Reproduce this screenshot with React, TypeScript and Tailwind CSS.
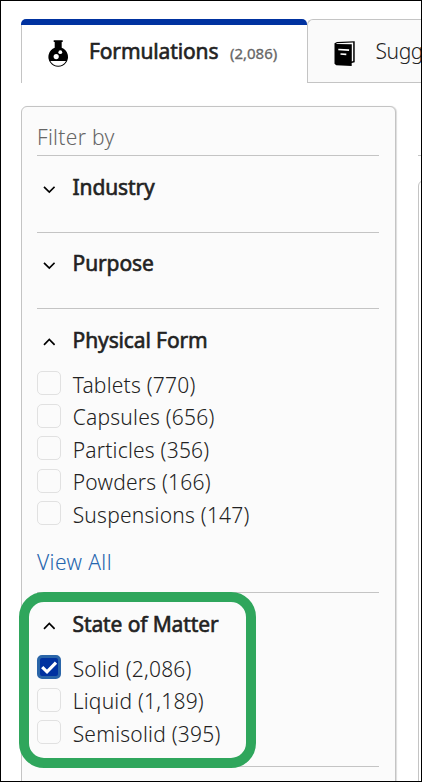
import { ReactNode } from 'react';

type Option = { label: string; count: string; checked?: boolean };

const physicalForms: Option[] = [
  { label: 'Tablets', count: '770' },
  { label: 'Capsules', count: '656' },
  { label: 'Particles', count: '356' },
  { label: 'Powders', count: '166' },
  { label: 'Suspensions', count: '147' },
];

const statesOfMatter: Option[] = [
  { label: 'Solid', count: '2,086', checked: true },
  { label: 'Liquid', count: '1,189' },
  { label: 'Semisolid', count: '395' },
];

function FlaskIcon() {
  return (
    <svg className="h-7 w-[21px] shrink-0" viewBox="0 0 21 28">
      <path d="M5.7 0.3h9v1.6h-1v5.9a9.8 9.8 0 1 1-7 0V1.9h-1z" fill="#000" />
      <path d="M2.4 21h15.6a8.8 8.8 0 0 1-15.6 0z" fill="#fff" />
      <circle cx="8.2" cy="16.6" r="2.6" fill="#fff" />
      <circle cx="12.3" cy="12.2" r="1.9" fill="#fff" />
    </svg>
  );
}

function BookIcon() {
  return (
    <svg className="h-[26px] w-[21px] shrink-0" viewBox="0 0 21 26">
      <path d="M0.5 2.2 3 .9 20.7 .3v21l-3 .8v2.9L2.3 24.2.5 22.8z" fill="#000" />
      <path d="M2.5 2.2 19.2 1.4v18.7l-1.4.4V3.3L2.5 3z" fill="#fff" />
      <path d="M4.3 8.5l10.8.6M6.5 13l5.8.4" stroke="#fff" strokeWidth="1.6" />
    </svg>
  );
}

function Chevron({ open }: { open?: boolean }) {
  return (
    <svg className="mt-px ml-[6px] h-3 w-3 shrink-0" viewBox="0 0 12 12" fill="none" stroke="#000" strokeWidth="1.7">
      <path d={open ? 'M1 8.8 6.3 3.5 11.6 8.8' : 'M1 3.8 6.3 9.1 11.6 3.8'} />
    </svg>
  );
}

function Heading({ title, open }: { title: string; open?: boolean }) {
  return (
    <button className="flex h-8 items-center">
      <Chevron open={open} />
      <span className="ml-[17.6px] tracking-[-0.12px] [-webkit-text-stroke:0.6px_#222]">{title}</span>
    </button>
  );
}

function Checkbox({ label, count, checked }: Option) {
  return (
    <label className="flex h-[32.5px] items-start">
      <span
        className={
          checked
            ? 'flex h-6 w-6 items-center justify-center rounded-[5px] border-3 border-[#2a65a8] bg-[#0032a0]'
            : 'h-6 w-6 rounded-[5px] border border-[#e1e1e1] bg-[#fbfbfb]'
        }
      >
        {checked && (
          <svg className="h-[18px] w-[18px] shrink-0" viewBox="0 0 18 18" fill="none" stroke="#fff" strokeWidth="3.2">
            <path d="M2.2 9.2 7 13.8 16 4.6" />
          </svg>
        )}
      </span>
      <span className="mt-[-0.2px] ml-[11.7px] font-[350] leading-7 tracking-[0.22px]">
        {label} ({count})
      </span>
    </label>
  );
}

function Section({ className, children }: { className: string; children?: ReactNode }) {
  return <section className={`w-[342px] border-t border-[#c4c4c4] ${className}`}>{children}</section>;
}

export default function App() {
  return (
    <main className="relative h-[782px] w-[422px] overflow-hidden border border-black bg-white font-['Noto_Sans',sans-serif] text-[21px] whitespace-nowrap text-[#222]">
      <nav className="mt-[18px] ml-5 flex">
        <div className="flex h-16 w-[286px] shrink-0 flex-col overflow-hidden rounded-t-[5px]">
          <div className="h-[6px] shrink-0 bg-[#0032a0]" />
          <div className="flex flex-1 items-start border-l border-[#c4c4c4]">
            <span className="mt-[15px] ml-[26px]">
              <FlaskIcon />
            </span>
            <span className="mt-3 ml-5 leading-7 tracking-[-0.12px] [-webkit-text-stroke:0.6px_#222]">Formulations</span>
            <span className="mt-[14px] ml-[11.5px] text-[15px] leading-7 text-[#666] [-webkit-text-stroke:0.3px_#666]">(2,086)</span>
          </div>
        </div>
        <div className="flex h-16 w-[115px] shrink-0 items-start rounded-tl-[6px] border border-r-0 border-[#c4c4c4] bg-[#fafafa]">
          <span className="mt-[21px] ml-[26px]">
            <BookIcon />
          </span>
          <span className="mt-[17px] ml-[20.5px] font-[350] leading-7 tracking-[-0.4px]">Sugg</span>
        </div>
      </nav>

      <div className="mt-[23px] ml-5 flex">
        <aside className="h-[700px] w-[375px] shrink-0 rounded-t-[6px] border border-[#c4c4c4] bg-[#fbfbfb] pl-[15px] shadow-[1px_0_1px_#ddd]">
          <div className="h-12 pt-4 font-[350] leading-7 tracking-[0.3px] text-[#666]">Filter by</div>
          <Section className="h-[77px] pt-4">
            <Heading title="Industry" />
          </Section>
          <Section className="h-[76px] pt-[15px]">
            <Heading title="Purpose" />
          </Section>
          <Section className="h-[284px] pt-4">
            <Heading title="Physical Form" open />
            <div className="mt-[14px]">
              {physicalForms.map((option) => (
                <Checkbox key={option.label} {...option} />
              ))}
            </div>
            <a className="mt-[15px] block font-[350] leading-[27px] tracking-[0.4px] text-[#2565ae]">View All</a>
          </Section>
          <Section className="h-[174px] pt-4">
            <Heading title="State of Matter" open />
            <div className="mt-[14px]">
              {statesOfMatter.map((option) => (
                <Checkbox key={option.label} {...option} />
              ))}
            </div>
          </Section>
          <Section className="h-4" />
        </aside>
        <div className="ml-[22px] w-40 shrink-0 pt-[49px]">
          <div className="border-t border-[#c4c4c4]" />
          <div className="mt-6 h-[640px] rounded-tl-[6px] border border-[#c4c4c4]" />
        </div>
      </div>

      {/* highlight around the State of Matter filter */}
      <div className="absolute top-[591px] left-[18px] h-[176px] w-[237px] rounded-[25px] border-10 border-[#2fa65c]" />
    </main>
  );
}
